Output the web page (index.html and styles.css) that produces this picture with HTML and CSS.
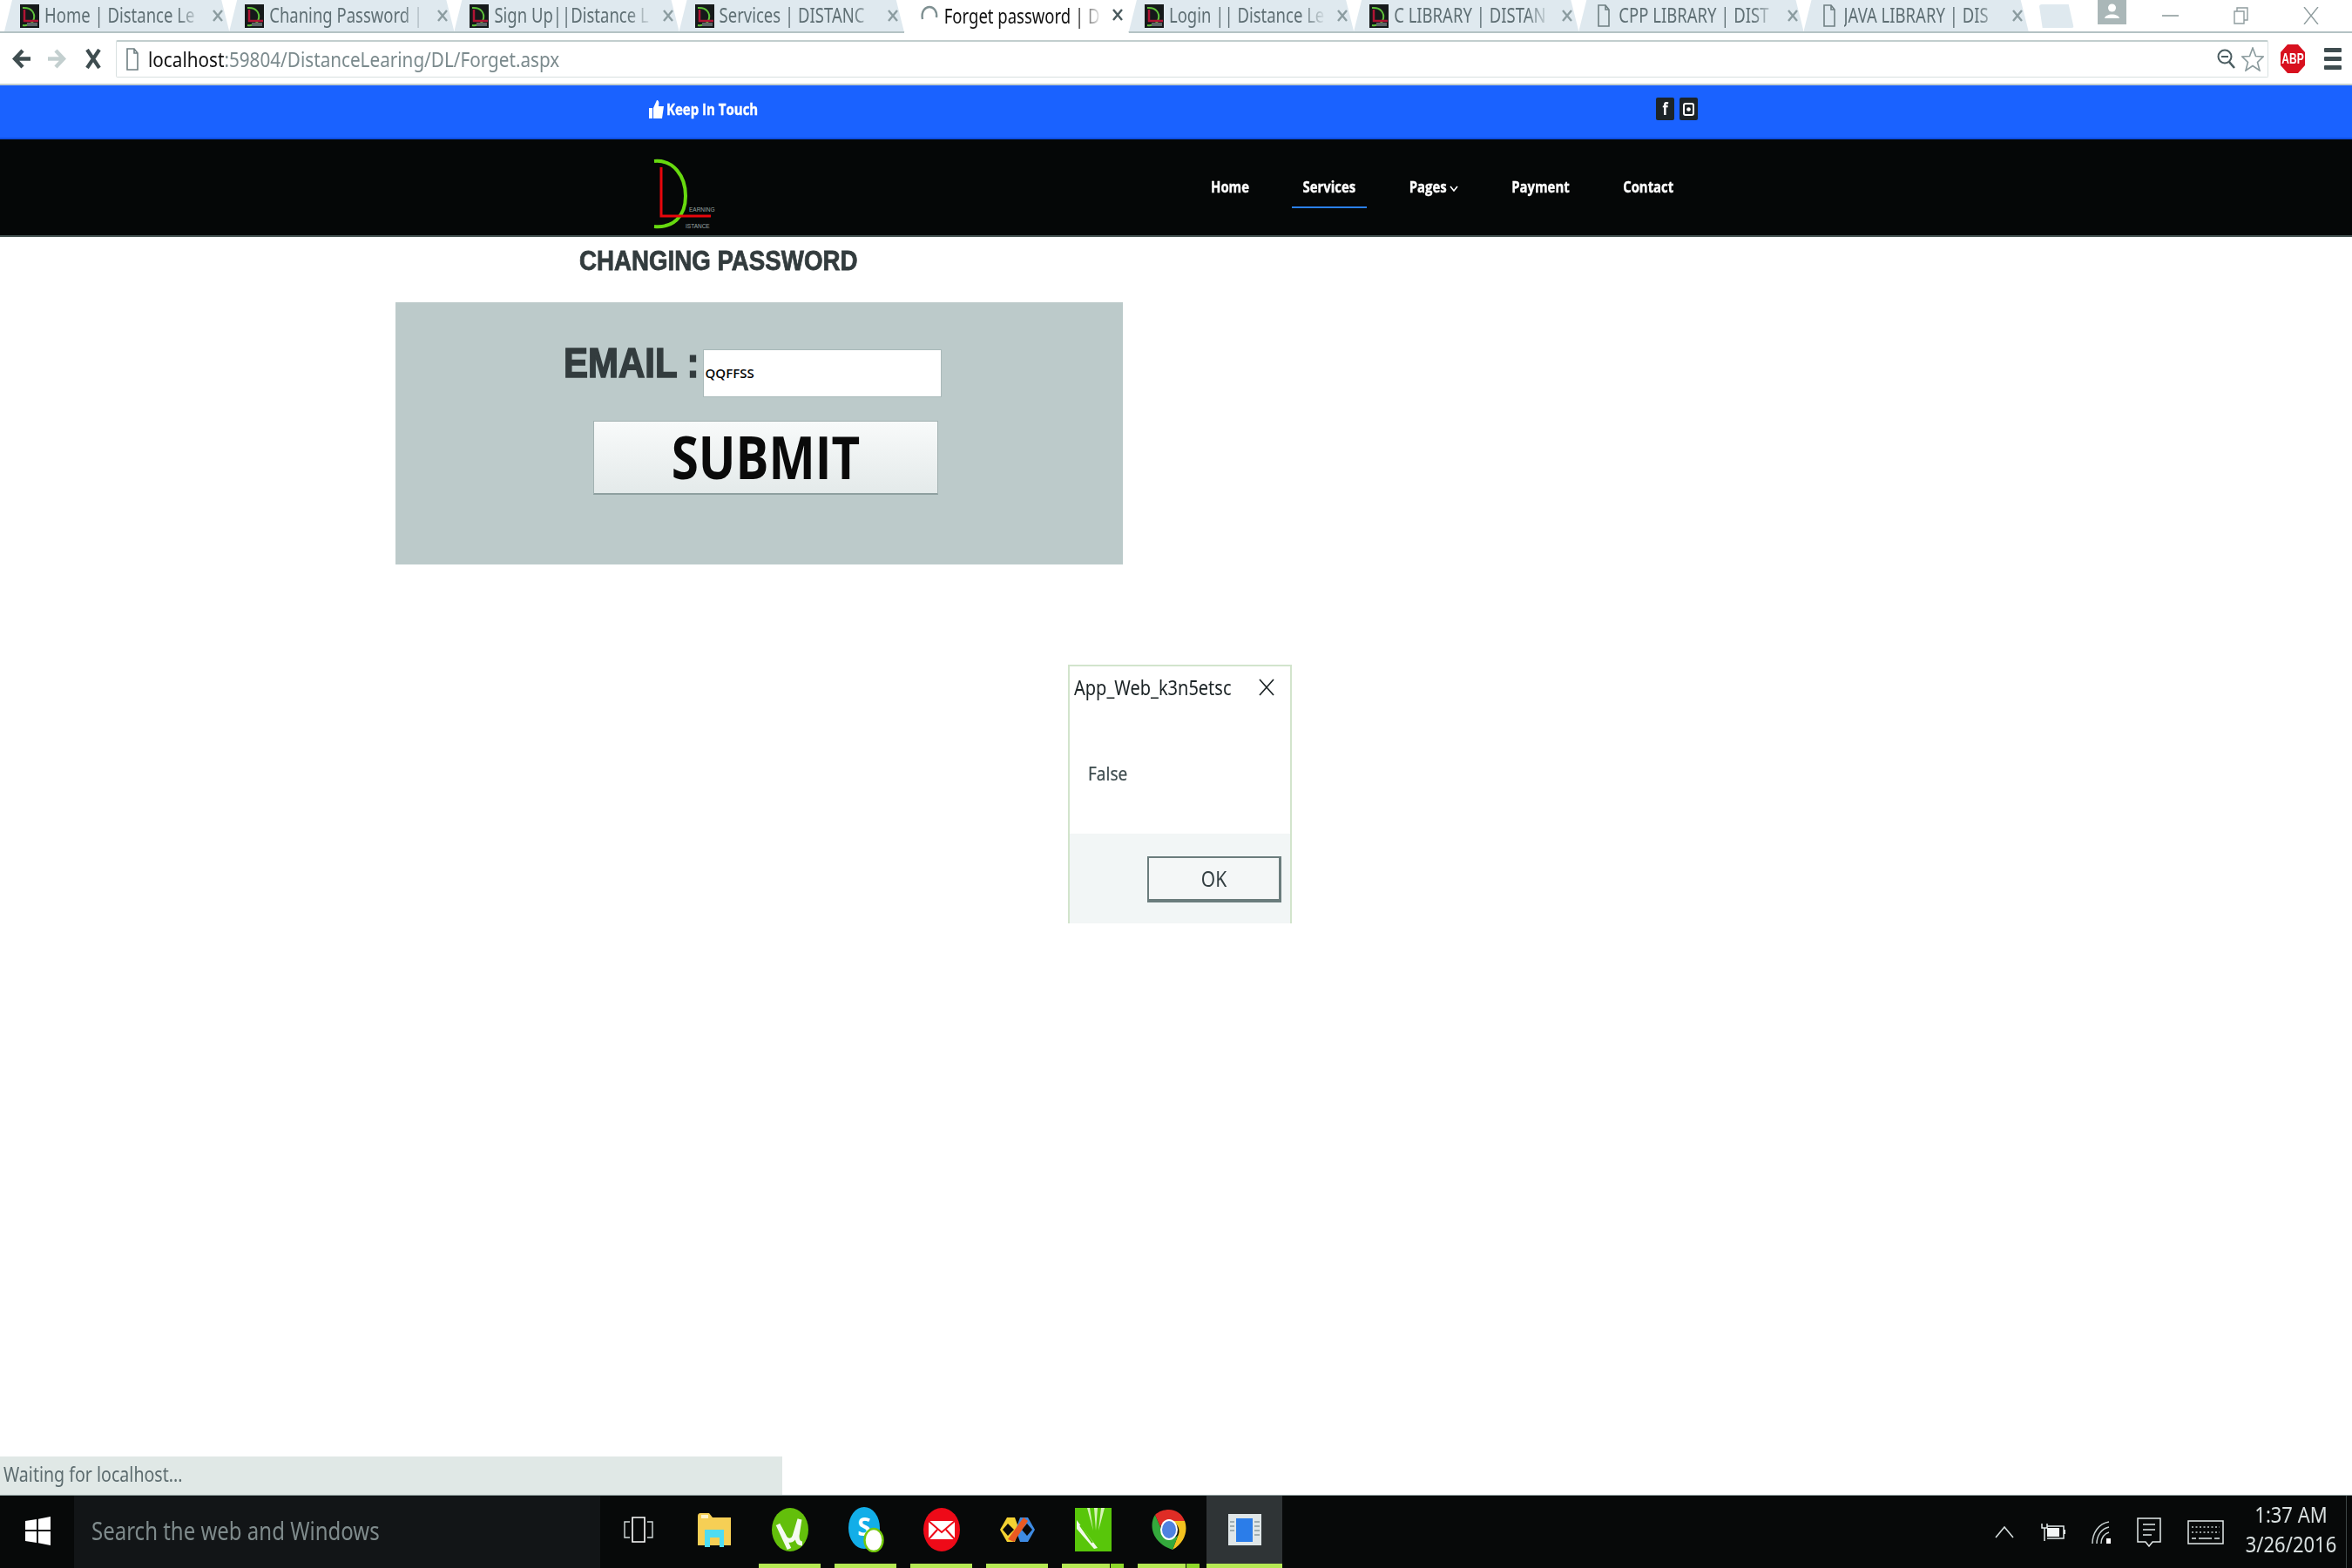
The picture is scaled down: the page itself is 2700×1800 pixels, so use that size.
FILE: index.html
```html
<!DOCTYPE html>
<html lang="en">
<head>
<meta charset="utf-8">
<title>Forget password</title>
<link rel="stylesheet" href="styles.css">
</head>
<body>
<svg class="defs" aria-hidden="true">
  <symbol id="fav" viewBox="0 0 22 27">
    <rect width="22" height="27" fill="#15191a"/>
    <path d="M3 4C14 3 17 11 16 16C15 22 9 25 3 24" fill="none" stroke="#5fc23a" stroke-width="2"/>
    <path d="M5 6V19H21" fill="none" stroke="#b01434" stroke-width="2.5"/>
    <rect x="8" y="21" width="12" height="4" fill="#5c6668"/>
  </symbol>
  <symbol id="doc" viewBox="0 0 14 26">
    <path d="M1 1H9L13 6V25H1Z M9 1V6H13" fill="none" stroke="#6f7f82" stroke-width="1.6"/>
  </symbol>
  <symbol id="cross" viewBox="0 0 12 14">
    <path d="M1 1L11 13M11 1L1 13" fill="none" stroke="currentColor" stroke-width="2.4"/>
  </symbol>
</svg>

<div class="page">
  <header class="tabstrip">
    <div class="tab"><svg class="favicon"><use href="#fav"/></svg><span class="tab-title"><span class="st">Home | Distance Le</span></span><svg class="tab-x"><use href="#cross"/></svg></div>
    <div class="tab"><svg class="favicon"><use href="#fav"/></svg><span class="tab-title"><span class="st">Chaning Password |</span></span><svg class="tab-x"><use href="#cross"/></svg></div>
    <div class="tab"><svg class="favicon"><use href="#fav"/></svg><span class="tab-title"><span class="st">Sign Up||Distance L</span></span><svg class="tab-x"><use href="#cross"/></svg></div>
    <div class="tab"><svg class="favicon"><use href="#fav"/></svg><span class="tab-title"><span class="st">Services | DISTANC</span></span><svg class="tab-x"><use href="#cross"/></svg></div>
    <div class="tab tab-active"><svg class="favicon spinner" viewBox="0 0 22 27"><path d="M3 19C1 9 7 5 11 5C16 5 20 10 19 17" fill="none" stroke="#7f9092" stroke-width="2.4"/></svg><span class="tab-title"><span class="st">Forget password | D</span></span><svg class="tab-x"><use href="#cross"/></svg></div>
    <div class="tab"><svg class="favicon"><use href="#fav"/></svg><span class="tab-title"><span class="st">Login || Distance Le</span></span><svg class="tab-x"><use href="#cross"/></svg></div>
    <div class="tab"><svg class="favicon"><use href="#fav"/></svg><span class="tab-title"><span class="st">C LIBRARY | DISTAN</span></span><svg class="tab-x"><use href="#cross"/></svg></div>
    <div class="tab"><svg class="favicon doc-fav"><use href="#doc"/></svg><span class="tab-title"><span class="st">CPP LIBRARY | DIST</span></span><svg class="tab-x"><use href="#cross"/></svg></div>
    <div class="tab"><svg class="favicon doc-fav"><use href="#doc"/></svg><span class="tab-title"><span class="st">JAVA LIBRARY | DIS</span></span><svg class="tab-x"><use href="#cross"/></svg></div>
    <div class="newtab"></div>
    <div class="profile">
      <svg viewBox="0 0 33 28" width="33" height="28"><rect width="33" height="28" fill="#aab7b8"/><circle cx="16.5" cy="9" r="4.5" fill="#fff"/><path d="M8 21C9 15 24 15 25 21Z" fill="#fff"/></svg>
    </div>
    <div class="winctl">
      <svg viewBox="0 0 19 20" width="19" height="20"><path d="M0 10H19" stroke="#8f9c9e" stroke-width="1.6"/></svg>
      <svg viewBox="0 0 17 20" width="17" height="20"><path d="M1 5H12V19H1Z M4 5V1H16V15H12" fill="none" stroke="#8f9c9e" stroke-width="1.4"/></svg>
      <svg viewBox="0 0 18 20" width="18" height="20"><path d="M1 0L17 20M17 0L1 20" stroke="#8f9c9e" stroke-width="1.4"/></svg>
    </div>
  </header>

  <div class="toolbar">
    <svg viewBox="0 0 22 23" width="22" height="23"><path d="M21 11.5H4M12 2L3 11.5L12 21" fill="none" stroke="#3f4d50" stroke-width="4.4"/></svg>
    <svg class="tb-fwd" viewBox="0 0 21 23" width="21" height="23"><path d="M0 11.5H17M9 2L18 11.5L9 21" fill="none" stroke="#c3cfcf" stroke-width="4.4"/></svg>
    <svg class="tb-stop" viewBox="0 0 18 23" width="18" height="23"><path d="M2 1L16 22M16 1L2 22" fill="none" stroke="#3f4d50" stroke-width="4.2"/></svg>
    <div class="omnibox">
      <svg class="omni-doc"><use href="#doc"/></svg>
      <div class="url"><span class="st"><span class="url-host">localhost</span>:59804/DistanceLearing/DL/Forget.aspx</span></div>
      <svg viewBox="0 0 21 23" width="21" height="23"><circle cx="9" cy="9" r="7.5" fill="none" stroke="#4a5c60" stroke-width="2"/><path d="M5 9H13" stroke="#4a5c60" stroke-width="2"/><path d="M14 15L20 22" stroke="#4a5c60" stroke-width="2.6"/></svg>
      <svg viewBox="0 0 26 28" width="26" height="28"><path d="M13 1L16.5 10.500L25 11L18.500 17.500L21 27L13 21.500L5 27L7.500 17.500L1 11L9.500 10.500Z" fill="#fff" stroke="#8a9a9d" stroke-width="1.6"/></svg>
    </div>
    <div class="abp"><svg viewBox="0 0 28 33" width="28" height="33"><path d="M8 0H20L28 9V24L20 33H8L0 24V9Z" fill="#d8111f"/></svg><span class="abp-label"><span class="st">ABP</span></span></div>
    <div class="menu"><i></i><i></i><i></i></div>
  </div>

  <div class="topbar">
    <div class="touch">
      <svg viewBox="0 0 17 22" width="17" height="22"><path d="M0 10H4V22H0Z M5 10L9 1C11 1 12 3 11 8H17L15 22H5Z" fill="#fff"/></svg>
      <span class="st">Keep In Touch</span>
    </div>
    <div class="social">
      <span class="soc"><span class="st">f</span></span>
      <span class="soc"><svg viewBox="0 0 13 15" width="13" height="15"><rect x="1" y="1" width="11" height="13" rx="2" fill="none" stroke="#fff" stroke-width="2"/><circle cx="6.500" cy="7.500" r="2.300" fill="#fff"/></svg></span>
    </div>
  </div>

  <div class="navbar">
    <svg class="logo" viewBox="0 0 80 85" width="80" height="85">
      <path d="M6 5C28 3 42 22 42 45C42 68 28 82 6 80" fill="none" stroke="#67d90f" stroke-width="4"/>
      <path d="M14 12V68H71" fill="none" stroke="#e8060c" stroke-width="3"/>
      <text x="46" y="63" class="logo-text">EARNING</text>
      <text x="42" y="82" class="logo-text">ISTANCE</text>
    </svg>
    <nav class="nav">
      <a class="nav-item"><span class="st">Home</span></a>
      <a class="nav-item nav-active"><span class="st">Services</span></a>
      <a class="nav-item"><span class="st">Pages</span><svg class="caret" viewBox="0 0 10 7" width="10" height="7"><path d="M1 1L5 6L9 1" fill="none" stroke="#fff" stroke-width="1.6"/></svg></a>
      <a class="nav-item"><span class="st">Payment</span></a>
      <a class="nav-item"><span class="st">Contact</span></a>
    </nav>
  </div>

  <main class="main">
    <h1 class="heading"><span class="st">CHANGING PASSWORD</span></h1>
    <section class="panel">
      <div class="email-row">
        <label class="email-label" for="email"><span class="st">EMAIL :</span></label>
        <input class="email-input" id="email" value="QQFFSS">
      </div>
      <button class="submit" type="button"><span class="st">SUBMIT</span></button>
    </section>
  </main>

  <div class="status"><span class="st">Waiting for localhost...</span></div>

  <div class="dialog">
    <div class="dialog-head">
      <span class="dialog-title st">App_Web_k3n5etsc</span>
      <svg viewBox="0 0 18 20" width="18" height="20"><path d="M1 1L17 19M17 1L1 19" stroke="#1c2426" stroke-width="1.7"/></svg>
    </div>
    <div class="dialog-body"><span class="st">False</span></div>
    <div class="dialog-foot"><div class="dialog-ok"><span class="st">OK</span></div></div>
  </div>

  <footer class="taskbar">
    <div class="start">
      <svg viewBox="0 0 29 33" width="29" height="33"><path d="M0 5L13 3V15H0Z M15 2.700L29 0V15H15Z M0 17H13V30L0 28Z M15 17H29V33L15 30.300Z" fill="#fff"/></svg>
    </div>
    <div class="search"><span class="st">Search the web and Windows</span></div>
    <div class="task">
      <div class="task-icon"><svg viewBox="0 0 34 30" width="34" height="30"><path d="M10 1H24V29H10Z" fill="none" stroke="#fff" stroke-width="1.600"/><path d="M7 6H1V24H7M27 6H33V24H27" fill="none" stroke="#d5dddd" stroke-width="1.400"/></svg></div>
      <div class="task-line task-line-off"></div>
    </div>
    <div class="task">
      <div class="task-icon"><svg viewBox="0 0 38 39" width="38" height="39"><path d="M0 4C0 1 1 0 3 0H13L17 5H38V37H0Z" fill="#f6cf55"/><rect x="4" y="2" width="8" height="4" fill="#fff4c8"/><path d="M8 39V19H30V39H25V28H14V39Z" fill="#4fdcf2"/></svg></div>
      <div class="task-line task-line-off"></div>
    </div>
    <div class="task">
      <div class="task-icon"><svg viewBox="0 0 42 50" width="42" height="50"><ellipse cx="21" cy="25" rx="21" ry="25" fill="#63bf0b"/><path d="M7 19L15 34C18 39 24 38 26 33L32 13M32 13L29 32C29 38 31 41 35 41M7 19L20 47" fill="none" stroke="#f4faf0" stroke-width="5"/></svg></div>
      <div class="task-line"></div>
    </div>
    <div class="task">
      <div class="task-icon"><svg viewBox="0 0 42 52" width="42" height="52"><ellipse cx="19" cy="24" rx="18" ry="24" fill="#12aee8"/><text x="19" y="33" class="skype-s">S</text><ellipse cx="30" cy="38" rx="10.500" ry="13" fill="#fff" stroke="#72c80c" stroke-width="2.400"/></svg></div>
      <div class="task-line"></div>
    </div>
    <div class="task">
      <div class="task-icon"><svg viewBox="0 0 42 50" width="42" height="50"><ellipse cx="21" cy="25" rx="21" ry="25" fill="#ee0a18"/><path d="M6 15H36V36H6Z" fill="#fff"/><path d="M6 15L21 28L36 15M6 36L16 25M36 36L26 25" fill="none" stroke="#ee0a18" stroke-width="2"/></svg></div>
      <div class="task-line"></div>
    </div>
    <div class="task">
      <div class="task-icon"><svg viewBox="0 0 40 30" width="40" height="30"><path d="M0 15L8 1H17L22 15L17 29H8Z" fill="#f3d132"/><path d="M23 1H32L40 15L32 29H23L18 15Z" fill="#3e8be3"/><path d="M9 8L16 15L9 22L3 15Z" fill="#0a0a0a"/><path d="M31 8L37 15L31 22L25 15Z" fill="#0a0a0a"/><path d="M27 1L32 5L16 29L9 26Z" fill="#ea5a22"/></svg></div>
      <div class="task-line"></div>
    </div>
    <div class="task">
      <div class="task-icon"><svg viewBox="0 0 42 50" width="42" height="50"><rect width="42" height="50" fill="#58c60a"/><path d="M14 0L21 26L17 0ZM22 0L24 26L26 0ZM30 0L27 26L34 0Z" fill="#d6f2b8"/><path d="M2 14L26 46L22 47L2 24Z" fill="#f2faea"/><path d="M6 20L20 40" stroke="#58c60a" stroke-width="2"/></svg></div>
      <div class="task-line task-line-split"><i></i><i></i></div>
    </div>
    <div class="task">
      <div class="task-icon"><svg viewBox="0 0 40 46" width="40" height="46"><path d="M20 0C28 0 35 5 38 13H20C15 13 11 16 10 20L4 6C8 2 14 0 20 0Z" fill="#df2d26"/><path d="M38 13C42 24 38 38 24 46L31 28C33 22 29 13 20 13Z" fill="#f3c21f"/><path d="M4 6C-3 16 -1 38 24 46L31 28C28 35 13 35 10 20Z" fill="#34a93c"/><ellipse cx="20" cy="23" rx="10" ry="12" fill="#fff"/><ellipse cx="20" cy="23" rx="8" ry="10" fill="#4f82e0"/></svg></div>
      <div class="task-line task-line-split"><i></i><i></i></div>
    </div>
    <div class="task task-active">
      <div class="task-icon"><svg viewBox="0 0 38 36" width="38" height="36"><rect width="38" height="36" fill="#dfe6e8"/><rect x="9" y="5" width="19" height="27" fill="#2b7de9"/><path d="M2 9H7M2 14H7M2 19H7M30 9H36M30 14H36M30 19H36M30 24H36" stroke="#8b9b9f" stroke-width="1.600"/></svg></div>
      <div class="task-line"></div>
    </div>
    <div class="tray">
      <svg viewBox="0 0 22 15" width="22" height="15"><path d="M1 14L11 2L21 14" fill="none" stroke="#d5dddd" stroke-width="1.600"/></svg>
      <svg viewBox="0 0 29 21" width="29" height="21"><path d="M2 1V6H8V1M5 6V21" fill="none" stroke="#e4eaea" stroke-width="1.500"/><path d="M8 4H27V18H8" fill="none" stroke="#e4eaea" stroke-width="1.500"/><rect x="8" y="6" width="14" height="10" fill="#f3f6f6"/><rect x="27" y="8" width="2" height="5" fill="#e4eaea"/></svg>
      <svg viewBox="0 0 22 26" width="22" height="26"><path d="M1 26C1 14 8 3 20 1M6 26C6 17 11 9 20 7M11 26C11 20 14 15 20 13" fill="none" stroke="#c9d2d2" stroke-width="1.500"/><rect x="17" y="20" width="5" height="6" fill="#fff"/></svg>
      <svg viewBox="0 0 28 34" width="28" height="34"><path d="M1 1H27V28H18L14 33L10 28H1Z" fill="none" stroke="#e4eaea" stroke-width="1.500"/><path d="M7 8H21M7 14H21M7 20H17" stroke="#e4eaea" stroke-width="1.500"/></svg>
      <svg viewBox="0 0 42 28" width="42" height="28"><rect x="1" y="1" width="40" height="26" fill="none" stroke="#e4eaea" stroke-width="1.500"/><path d="M5 8H37M5 14H37" stroke="#c9d2d2" stroke-width="1.500" stroke-dasharray="2 2.500"/><path d="M5 21H10M13 21H28M31 21H37" stroke="#e4eaea" stroke-width="1.500"/></svg>
      <div class="clock"><span class="st">1:37 AM</span><span class="st">3/26/2016</span></div>
    </div>
  </footer>
</div>
</body>
</html>
```

FILE: styles.css
```css
* { box-sizing: border-box; }
html, body { margin: 0; padding: 0; background: #fff; }
body { font-family: "Noto Sans", "Open Sans", sans-serif; color: #333; }
.defs { position: absolute; width: 0; height: 0; }
.st { display: inline-block; transform: scaleY(1.18); }

.page { position: relative; width: 2700px; height: 1800px; display: flex; flex-direction: column; overflow: hidden; }

/* Browser chrome */
.tabstrip { height: 38px; flex: none; display: flex; padding-left: 5px; border-bottom: 2px solid #b4c2c4; }
.tab { width: 258.2px; flex: none; display: flex; align-items: center; padding: 0 7px 0 18px; gap: 6px; background: #dfe9ef; color: #5f6f74; clip-path: polygon(9px 0, calc(100% - 9px) 0, 100% 100%, 0 100%); }
.tab-active { background: #fff; color: #111; margin-bottom: -2px; height: 38px; align-items: flex-start; padding-top: 3px; }
.tab-active .tab-x { color: #4a5a5e; }
.favicon { width: 22px; height: 27px; flex: none; }
.doc-fav { width: 14px; height: 26px; margin-left: 4px; margin-right: 4px; }
.tab-title { flex: 1; min-width: 0; white-space: nowrap; font-size: 18.5px; line-height: 30px; height: 32px; -webkit-mask-image: linear-gradient(90deg, #000 84%, transparent 100%); mask-image: linear-gradient(90deg, #000 84%, transparent 100%); }
.tab-title .st { transform: scaleY(1.3); }
.tab-x { width: 12px; height: 14px; flex: none; color: #8b9ca0; margin-left: 6px; }
.tab-active .tab-x { margin-top: 7px; }
.newtab { width: 40px; height: 27px; margin: 5px 0 0 12px; flex: none; background: #dfe9ef; border-radius: 3px; clip-path: polygon(0 0, 85% 0, 100% 100%, 10% 100%); }
.profile { margin-left: 27px; flex: none; height: 28px; }
.profile svg { display: block; }
.winctl { margin-left: 41px; display: flex; gap: 63px; padding-top: 8px; flex: none; }
.winctl svg { display: block; }

.toolbar { height: 60px; flex: none; display: flex; align-items: center; padding: 0 12px 0 14px; background: #fff; border-bottom: 2px solid #c4cfcf; }
.toolbar > svg { flex: none; }
.tb-fwd { margin-left: 19px; }
.tb-stop { margin-left: 22px; }
.omnibox { flex: 1; margin-left: 17px; height: 43px; display: flex; align-items: center; gap: 7px; padding: 0 4px 0 11px; border: 1px solid #d8e0e0; border-top: 2px solid #c2cece; border-radius: 2px; background: #fff; }
.omni-doc { width: 14px; height: 26px; flex: none; margin-right: 4px; }
.url { flex: 1; font-size: 20.7px; color: #7b8a8d; white-space: nowrap; }
.url-host { color: #111; }
.abp { position: relative; margin-left: 14px; width: 28px; height: 33px; flex: none; }
.abp svg { display: block; }
.abp-label { position: absolute; inset: 0; display: flex; align-items: center; justify-content: center; color: #fff; font: bold 12px "Liberation Sans", sans-serif; }
.abp-label .st { transform: scaleY(1.4); }
.menu { margin-left: 22px; width: 20px; flex: none; display: flex; flex-direction: column; gap: 5px; }
.menu i { display: block; height: 5px; border-radius: 1px; background: #3f4d50; }

/* Site header */
.topbar { height: 62px; flex: none; display: flex; align-items: center; justify-content: space-between; padding: 0 751px 6px 745px; background: #1a62ff; border-bottom: 2px solid #0f50e2; color: #fff; }
.touch { display: flex; align-items: center; gap: 3px; font: 700 15px "Open Sans", sans-serif; -webkit-text-stroke: 0.3px #fff; }
.social { display: flex; gap: 6px; }
.soc { width: 21px; height: 26px; display: flex; align-items: center; justify-content: center; background: #1c2428; border-radius: 2px; font: 700 16px "Open Sans", sans-serif; }

.navbar { height: 112px; flex: none; display: flex; padding-left: 745px; background: #050707; border-bottom: 2px solid #42504f; }
.logo { flex: none; margin-top: 20px; }
.logo-text { font: 6.5px "Liberation Sans", sans-serif; fill: #9aa5a5; }
.nav { display: flex; gap: 35.5px; margin: 33px 0 0 552px; height: 46px; }
.nav-item { height: 46px; padding: 0 13px; border-bottom: 2px solid transparent; color: #fff; font: 700 14.9px/43px "Open Sans", sans-serif; -webkit-text-stroke: 0.3px #fff; white-space: nowrap; }
.nav-active { border-bottom-color: #2a7fe8; }
.caret { margin-left: 3px; }

/* Main */
.main { flex: 1; padding-left: 454px; }
.heading { margin: 0 0 19px 211px; font: 700 27.7px/56px "Liberation Sans", Arial, sans-serif; color: #333c3e; -webkit-text-stroke: 0.7px #333c3e; }
.heading .st { transform: scaleY(1.12); }
.panel { width: 835px; height: 301px; padding: 54px 0 0 193px; background: #bccaca; }
.email-row { display: flex; align-items: flex-start; gap: 4px; }
.email-label { font: 700 42px/31px "Liberation Sans", Arial, sans-serif; color: #333c3e; -webkit-text-stroke: 1.4px #333c3e; white-space: pre; }
.email-label .st { transform: scaleY(1.16); }
.email-input { width: 274px; height: 55px; padding: 0 2px 2px; border: 1px solid #a9b9b9; background: #fff; color: #050505; font: 600 15px "Open Sans", sans-serif; }
.submit { display: flex; align-items: center; justify-content: center; width: 396px; height: 85px; margin: 27px 0 0 34px; padding: 0; border: 1px solid #a3b2b2; border-bottom: 2px solid #8fa0a0; background: linear-gradient(#f8fafa, #e4eaea); color: #0a0a0a; font: 700 56.500px/1 "Open Sans", sans-serif; }
.submit .st { transform: scaleY(1.2); }

/* Overlays */
.status { position: absolute; left: 0; bottom: 84px; width: 898px; height: 44px; display: flex; align-items: center; padding: 0 0 3px 4px; background: #e0e8e6; color: #5c6b6e; font-size: 19.6px; }

.dialog { position: absolute; left: 1226px; top: 763px; width: 257px; height: 297px; display: flex; flex-direction: column; background: #fff; border: 2px solid #d2e4cc; border-bottom: 0; }
.dialog-head { height: 48px; flex: none; display: flex; align-items: center; justify-content: space-between; padding: 0 18px 0 5px; }
.dialog-title { font-size: 20px; color: #1c2426; }
.dialog-body { flex: 1; padding: 60px 0 0 21px; font-size: 19px; line-height: 30px; color: #3d4b4e; -webkit-text-stroke: 0.2px #3d4b4e; }
.dialog-foot { height: 103px; flex: none; display: flex; justify-content: flex-end; padding: 26px 10px 0 0; background: #f2f6f6; }
.dialog-ok { width: 154px; height: 53px; display: flex; align-items: center; justify-content: center; background: #f4f7f7; border: 2px solid #6b7d7d; border-bottom-width: 4px; border-right-width: 3px; color: #333f42; font-size: 21px; }

/* Taskbar */
.taskbar { height: 84px; flex: none; display: flex; background: #070909; border-top: 1px solid #8d9c9c; color: #fff; }
.start { width: 85px; flex: none; display: flex; align-items: center; justify-content: center; padding: 0 0 3px 1px; }
.search { width: 604px; flex: none; display: flex; align-items: center; padding: 0 0 4px 20px; background: #121517; color: #7f8b8c; font-size: 24px; }
.search .st { transform: scaleY(1.24); }
.task { width: 87px; flex: none; display: flex; flex-direction: column; }
.task-active { background: #2f3436; }
.task-icon { flex: 1; display: flex; align-items: center; justify-content: center; }
.task-line { height: 5px; margin: 0 8px; background: #b5e853; }
.task-active .task-line { margin: 0; }
.task-line-off { visibility: hidden; }
.task-line-split { display: flex; gap: 1px; background: none; }
.task-line-split i { display: block; height: 5px; background: #b5e853; flex: 1; }
.task-line-split i:last-child { flex: none; width: 15px; background: #8ed82a; }
.tray { margin-left: auto; display: flex; align-items: center; gap: 30px; padding: 0 2px 0 0; border-right: 1px solid #3d4646; margin-right: 6px; }
.tray svg { flex: none; }
.clock { width: 94px; display: flex; flex-direction: column; align-items: center; gap: 6px; margin: 0 14px 10px 0; color: #d9e0e0; font-size: 22px; line-height: 28px; white-space: nowrap; }
.skype-s { font: 700 28px "Open Sans", sans-serif; fill: #fff; text-anchor: middle; }
```
